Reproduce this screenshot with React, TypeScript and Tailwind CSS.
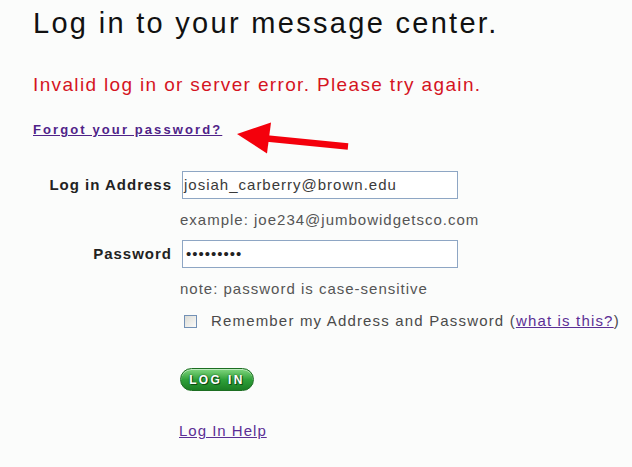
import React from 'react'

const font = { fontFamily: '"Liberation Sans", Arial, sans-serif' }

function LoginButton() {
  return (
    <button
      type="button"
      className="flex h-[23px] w-[74px] items-center justify-center rounded-full border border-[#1c6e22] bg-gradient-to-b from-[#7fd77f] via-[#2fa23a] to-[#1b7d24] text-[12px] font-black leading-none tracking-[2.4px] text-white shadow-[inset_0_1px_0_rgba(255,255,255,0.5)] [text-shadow:0_0_2px_#0c4d12,1px_1px_0_#0c4d12]"
    >
      LOG IN
    </button>
  )
}

function Arrow() {
  return (
    <svg className="pointer-events-none absolute left-0 top-0" width="632" height="467" aria-hidden="true">
      <line x1="262" y1="138" x2="348" y2="146.5" stroke="#f4000c" strokeWidth="6.5" />
      <polygon points="237,134 271,122.5 267,153.5" fill="#f4000c" />
    </svg>
  )
}

export default function App() {
  return (
    <div className="relative h-[467px] w-[632px] overflow-hidden bg-[#fbfcfb] pl-[33px] pt-[6px]" style={font}>
      <h1 className="text-[29px] font-normal leading-[34px] tracking-[2.3px] text-[#111]">
        Log in to your message center.
      </h1>

      <p className="mt-[34px] text-[19px] leading-[22px] tracking-[1.35px] text-[#d5141f]">
        Invalid log in or server error. Please try again.
      </p>

      <a
        href="#"
        className="mt-[26px] block w-fit text-[13px] font-bold leading-[16px] tracking-[2.1px] text-[#4f2388] underline"
      >
        Forgot your password?
      </a>

      <form className="mt-[33px] grid grid-cols-[139px_276px] gap-x-[10px] text-[15px] leading-[18px] tracking-[1px]">
        <label className="self-center text-right font-bold text-[#222]">Log in Address</label>
        <div className="flex h-[28px] items-center border border-[#8ea6c4] bg-white pl-[1px] text-[#3a3a3a]">
          josiah_carberry@brown.edu
        </div>

        <span className="col-start-2 ml-[-2px] mt-[12px] whitespace-nowrap text-[#555]">
          example: joe234@jumbowidgetsco.com
        </span>

        <label className="mt-[11px] self-center text-right font-bold text-[#222]">Password</label>
        <div className="mt-[11px] flex h-[28px] items-center border border-[#8ea6c4] bg-white pl-[3px] text-[#222]">
          •••••••••
        </div>

        <span className="col-start-2 ml-[-2px] mt-[12px] whitespace-nowrap text-[#555]">
          note: password is case-sensitive
        </span>

        <div className="col-start-2 mt-[14px] flex w-[460px] items-center">
          <span className="ml-[2px] h-[13px] w-[13px] border border-[#7391b6] bg-gradient-to-br from-[#dcdcd6] to-[#fbfbf9]" />
          <span className="ml-[14px] whitespace-nowrap tracking-[1.17px] text-[#4a4a4a]">
            Remember my Address and Password (
            <a href="#" className="text-[#5b2f95] underline">
              what is this?
            </a>
            )
          </span>
        </div>

        <div className="col-start-2 ml-[-2px] mt-[38px]">
          <LoginButton />
        </div>

        <a href="#" className="col-start-2 ml-[-3px] mt-[31px] w-fit text-[#5b2f95] underline">
          Log In Help
        </a>
      </form>

      <Arrow />
    </div>
  )
}
